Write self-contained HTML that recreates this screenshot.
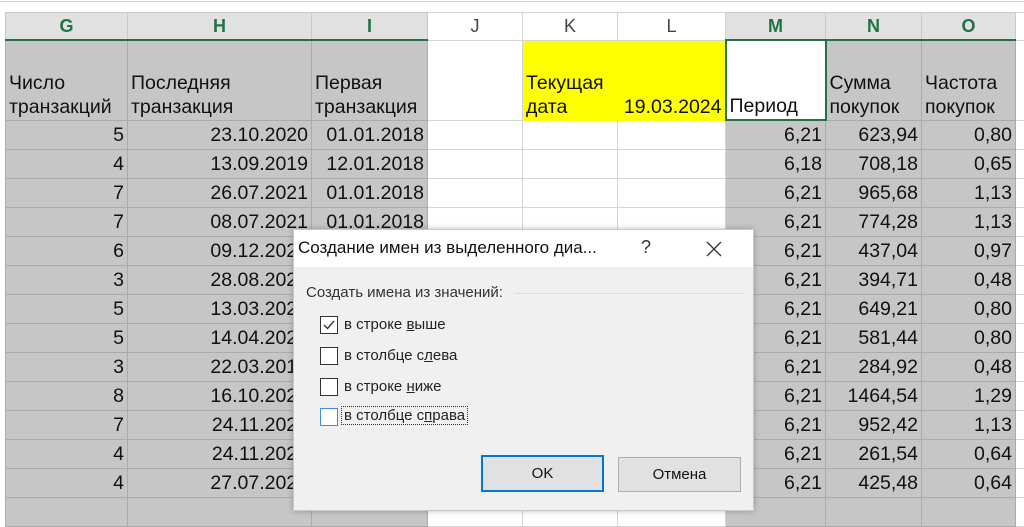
<!DOCTYPE html>
<html><head><meta charset="utf-8"><style>
body{margin:0;width:1024px;height:503px;overflow:hidden;background:#fff;font-family:"Liberation Sans",sans-serif;position:relative}
.topline{position:absolute;left:0;top:1px;width:1024px;height:1px;background:#d0d0d0}
table{position:absolute;left:5px;top:12px;width:1030px;border-collapse:collapse;table-layout:fixed;font-size:19.5px;color:#111}
td{padding:0 3px;border:1px solid #d4d4d4;white-space:nowrap;overflow:hidden;text-align:right;height:28px;line-height:28px}
tr.h td{height:26px;line-height:26px;text-align:center;font-size:18px;color:#444;background:#fff;border-bottom:1px solid #d4d4d4}
tr.h td.s{background:#e1e1e1;color:#217346;font-weight:bold;border-bottom:2px solid #217346;border-color:#c8c8c8 #c8c8c8 #217346}
td.g{background:#c6c6c6;border-color:#ababab}
tr.r1 td{height:77px;vertical-align:bottom;text-align:left;line-height:24px;padding-bottom:1px}
td.y{background:#ff0;border-color:#ff0}
td.act{background:#fff;border:2px solid #217346}
.dlg{position:absolute;left:293px;top:229px;width:459px;height:280px;background:#f0f0f0;border:1px solid #c8c8c8;box-shadow:0 0 6px rgba(0,0,0,.25);font-size:15px;color:#222}
.tb{height:37px;background:#fff;position:relative}
.tb .t{position:absolute;left:4px;top:8px;font-size:17px;color:#111}
.tb .q{position:absolute;left:347px;top:7px;font-size:18px;color:#333}
.grp{position:absolute;left:12px;top:54px;color:#333}
.ln{position:absolute;left:220px;top:63px;width:230px;height:1px;background:#ddd}
.cb{position:absolute;left:26px;width:16px;height:16px;border:1px solid #333;background:#fff}
.lb{position:absolute;left:50px;color:#222}
.btn{position:absolute;top:457px;height:33px;line-height:33px;text-align:center;background:#e1e1e1;border:1px solid #adadad;font-size:15px;color:#111}
</style></head><body>
<div class="topline"></div>
<table>
<colgroup><col style="width:122px"><col style="width:184px"><col style="width:116px"><col style="width:95px"><col style="width:95px"><col style="width:108px"><col style="width:100px"><col style="width:96px"><col style="width:94px"><col style="width:20px"></colgroup>
<tr class="h"><td class="s">G</td><td class="s">H</td><td class="s">I</td><td>J</td><td>K</td><td>L</td><td class="s">M</td><td class="s">N</td><td class="s">O</td><td></td></tr>
<tr class="r1"><td class="g">Число<br>транзакций</td><td class="g">Последняя<br>транзакция</td><td class="g">Первая<br>транзакция</td><td></td><td class="y">Текущая<br>дата</td><td class="y" style="text-align:right">19.03.2024</td><td class="act">Период</td><td class="g">Сумма<br>покупок</td><td class="g">Частота<br>покупок</td><td></td></tr>
<tr><td class="g">5</td><td class="g">23.10.2020</td><td class="g">01.01.2018</td><td></td><td></td><td></td><td class="g">6,21</td><td class="g">623,94</td><td class="g">0,80</td><td></td></tr>
<tr><td class="g">4</td><td class="g">13.09.2019</td><td class="g">12.01.2018</td><td></td><td></td><td></td><td class="g">6,18</td><td class="g">708,18</td><td class="g">0,65</td><td></td></tr>
<tr><td class="g">7</td><td class="g">26.07.2021</td><td class="g">01.01.2018</td><td></td><td></td><td></td><td class="g">6,21</td><td class="g">965,68</td><td class="g">1,13</td><td></td></tr>
<tr><td class="g">7</td><td class="g">08.07.2021</td><td class="g">01.01.2018</td><td></td><td></td><td></td><td class="g">6,21</td><td class="g">774,28</td><td class="g">1,13</td><td></td></tr>
<tr><td class="g">6</td><td class="g">09.12.2020</td><td class="g"></td><td></td><td></td><td></td><td class="g">6,21</td><td class="g">437,04</td><td class="g">0,97</td><td></td></tr>
<tr><td class="g">3</td><td class="g">28.08.2022</td><td class="g"></td><td></td><td></td><td></td><td class="g">6,21</td><td class="g">394,71</td><td class="g">0,48</td><td></td></tr>
<tr><td class="g">5</td><td class="g">13.03.2022</td><td class="g"></td><td></td><td></td><td></td><td class="g">6,21</td><td class="g">649,21</td><td class="g">0,80</td><td></td></tr>
<tr><td class="g">5</td><td class="g">14.04.2022</td><td class="g"></td><td></td><td></td><td></td><td class="g">6,21</td><td class="g">581,44</td><td class="g">0,80</td><td></td></tr>
<tr><td class="g">3</td><td class="g">22.03.2019</td><td class="g"></td><td></td><td></td><td></td><td class="g">6,21</td><td class="g">284,92</td><td class="g">0,48</td><td></td></tr>
<tr><td class="g">8</td><td class="g">16.10.2022</td><td class="g"></td><td></td><td></td><td></td><td class="g">6,21</td><td class="g">1464,54</td><td class="g">1,29</td><td></td></tr>
<tr><td class="g">7</td><td class="g">24.11.2022</td><td class="g"></td><td></td><td></td><td></td><td class="g">6,21</td><td class="g">952,42</td><td class="g">1,13</td><td></td></tr>
<tr><td class="g">4</td><td class="g">24.11.2022</td><td class="g"></td><td></td><td></td><td></td><td class="g">6,21</td><td class="g">261,54</td><td class="g">0,64</td><td></td></tr>
<tr><td class="g">4</td><td class="g">27.07.2022</td><td class="g"></td><td></td><td></td><td></td><td class="g">6,21</td><td class="g">425,48</td><td class="g">0,64</td><td></td></tr>
<tr><td class="g"></td><td class="g"></td><td class="g"></td><td></td><td></td><td></td><td class="g"></td><td class="g"></td><td class="g"></td><td></td></tr>
</table>
<div class="dlg">
<div class="tb"><span class="t">Создание имен из выделенного диа...</span><span class="q">?</span>
<svg style="position:absolute;left:412px;top:11px" width="16" height="16"><path d="M1 1L15 15M15 1L1 15" stroke="#333" stroke-width="1.3" fill="none"/></svg></div>
<div class="grp">Создать имена из значений:</div><div class="ln"></div>
<div class="cb" style="top:86px"><svg width="16" height="16"><path d="M3 8L6.5 11.5L13 4" stroke="#333" stroke-width="1.4" fill="none"/></svg></div><div class="lb" style="top:86px">в строке <u>в</u>ыше</div>
<div class="cb" style="top:117px"></div><div class="lb" style="top:117px">в столбце с<u>л</u>ева</div>
<div class="cb" style="top:148px"></div><div class="lb" style="top:148px">в строке <u>н</u>иже</div>
<div class="cb" style="top:178px;border-color:#3c8fe0"></div><div class="lb" style="top:177px;left:48px;outline:1px dotted #333;padding:0 2px">в столбце с<u>п</u>рава</div>
</div>
<div class="btn" style="left:481px;width:119px;border:2px solid #0078d7;top:455px">OK</div>
<div class="btn" style="left:618px;width:121px">Отмена</div>
</body></html>
